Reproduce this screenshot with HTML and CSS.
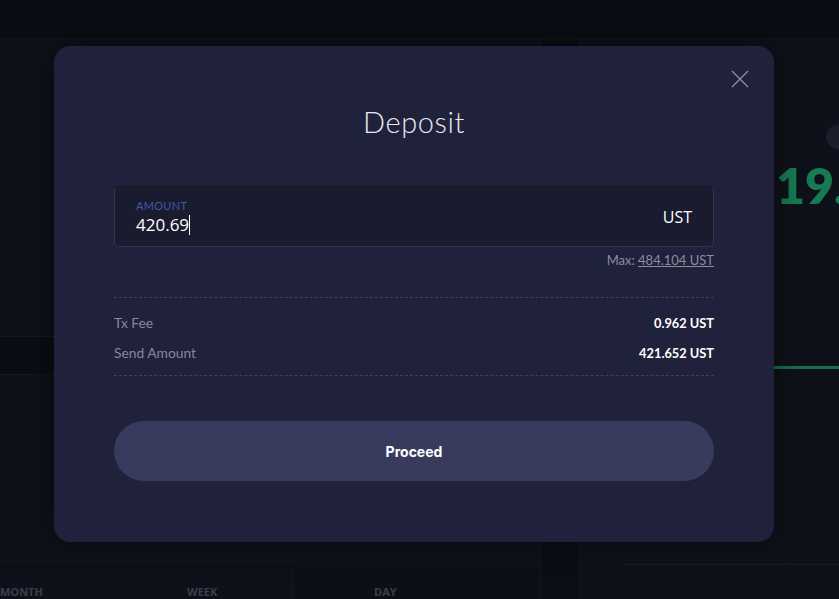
FILE: index.html
```html
<!DOCTYPE html>
<html lang="en">
<head>
    <meta charset="UTF-8">
    <meta name="viewport" content="width=device-width, initial-scale=1.0">
    <title>Deposit</title>
    <link rel="stylesheet" href="styles.css">
</head>
<body>
    <div class="app">
        <div class="topbar"></div>
        <div class="dashboard">
            <div class="left-col">
                <div class="panel panel-top"></div>
                <div class="band"></div>
                <div class="panel panel-mid"></div>
                <div class="panel panel-bottom">
                    <div class="tabs">
                        <span>MONTH</span>
                        <span>WEEK</span>
                        <span>DAY</span>
                    </div>
                </div>
            </div>
            <div class="gutter"></div>
            <div class="right-col">
                <div class="toggle"></div>
                <div class="big-number">19.</div>
                <div class="green-line"></div>
                <div class="right-bottom"></div>
            </div>
        </div>
    </div>

    <div class="modal">
        <button class="close" aria-label="Close">
            <svg width="18" height="18" viewBox="0 0 18 18">
                <path d="M1 1 L17 17 M17 1 L1 17" stroke="#8e90a3" stroke-width="1.3" fill="none"/>
            </svg>
        </button>
        <h1 class="title">Deposit</h1>

        <div class="amount-box">
            <div class="amount-left">
                <div class="amount-label">AMOUNT</div>
                <div class="amount-value">420.69<span class="caret"></span></div>
            </div>
            <div class="amount-unit">UST</div>
        </div>
        <div class="max">Max: <a href="#">484.104 UST</a></div>

        <div class="divider first"></div>
        <div class="row row-fee">
            <span class="row-label">Tx Fee</span>
            <span class="row-value">0.962 UST</span>
        </div>
        <div class="row row-send">
            <span class="row-label">Send Amount</span>
            <span class="row-value">421.652 UST</span>
        </div>
        <div class="divider second"></div>

        <button class="proceed">Proceed</button>
    </div>
</body>
</html>
```

FILE: styles.css
```css
body {
    margin: 0;
    width: 839px;
    height: 599px;
    overflow: hidden;
    background-color: #0d0f17;
    font-family: Lato, "Open Sans", Arial, sans-serif;
}

.app {
    display: flex;
    flex-direction: column;
    height: 100%;
}

.topbar {
    height: 40px;
    background-color: #0b0d14;
    border-bottom: 1px solid #131623;
}

.dashboard {
    flex: 1;
    display: flex;
}

.left-col {
    width: 540px;
    display: flex;
    flex-direction: column;
}

.panel-top {
    height: 297px;
    background-color: #0f111a;
}

.band {
    height: 37px;
    background-color: #0b0d15;
    border-top: 1px solid #141724;
    border-bottom: 1px solid #141724;
}

.panel-mid {
    height: 191px;
    background-color: #0f111a;
}

.panel-bottom {
    flex: 1;
    width: 292px;
    background-color: #0f111a;
    border-top: 1px solid #080a10;
    border-right: 1px solid #141724;
    border-top-right-radius: 6px;
}

.tabs {
    display: flex;
    padding-top: 17px;
    font-family: "Open Sans", Arial, sans-serif;
    font-weight: 700;
    font-size: 11px;
    color: #3b3e4c;
}

.tabs span {
    flex-shrink: 0;
    width: 187px;
}

.gutter {
    width: 38px;
    background-color: #0c0e15;
    border-left: 1px solid #151826;
    border-right: 1px solid #151826;
}

.right-col {
    flex: 1;
    position: relative;
    background-color: #0f111a;
}

.toggle {
    position: absolute;
    left: 246px;
    top: 86px;
    width: 30px;
    height: 24px;
    border-radius: 12px;
    background-color: #1c1e2b;
}

.big-number {
    position: absolute;
    left: 196px;
    top: 116px;
    font-family: Lato, Arial, sans-serif;
    font-weight: 800;
    font-size: 50px;
    color: #167a52;
}

.green-line {
    position: absolute;
    left: 0;
    right: 0;
    top: 327px;
    height: 3px;
    background-color: #15714b;
}

.right-bottom {
    position: absolute;
    left: 40px;
    right: 0;
    top: 525px;
    bottom: 0;
    border-top: 1px solid #161927;
}

.modal {
    position: absolute;
    left: 54px;
    top: 46px;
    width: 720px;
    height: 496px;
    box-sizing: border-box;
    padding: 59px 60px 0;
    background-color: #20213a;
    border-radius: 16px;
    box-shadow: 0 0 30px rgba(0, 0, 0, 0.5);
}

.close {
    position: absolute;
    top: 24px;
    right: 25px;
    padding: 0;
    border: none;
    background: none;
    cursor: pointer;
}

.close svg {
    display: block;
}

.title {
    margin: 0 0 47px;
    height: 34px;
    line-height: 34px;
    text-align: center;
    font-family: Lato, Arial, sans-serif;
    font-weight: 300;
    font-size: 29px;
    color: #e8e9f0;
    letter-spacing: 0.6px;
}

.amount-box {
    height: 61px;
    box-sizing: border-box;
    display: flex;
    align-items: center;
    justify-content: space-between;
    padding: 0 21px;
    background-color: #1a1b2f;
    border: 1px solid #34364d;
    border-top-color: #15161f;
    border-radius: 5px;
}

.amount-left {
    padding-top: 2px;
}

.amount-label {
    font-size: 11px;
    line-height: 14px;
    color: #3d5aa6;
    letter-spacing: 0.3px;
}

.amount-value {
    display: flex;
    align-items: center;
    font-family: "Open Sans", Arial, sans-serif;
    font-size: 17px;
    line-height: 24px;
    color: #ffffff;
}

.caret {
    display: inline-block;
    width: 1px;
    height: 20px;
    margin-left: 0;
    background-color: #ffffff;
}

.amount-unit {
    font-family: "Open Sans", Arial, sans-serif;
    font-size: 16px;
    color: #ffffff;
}

.max {
    margin-top: 6px;
    line-height: 14px;
    text-align: right;
    font-size: 13px;
    color: #8b8d9e;
}

.max a {
    color: #8b8d9e;
    text-decoration: underline;
}

.divider {
    border-top: 1px dashed #3f4157;
}

.divider.first {
    margin-top: 30px;
}

.divider.second {
    margin-top: 14px;
}

.row {
    display: flex;
    justify-content: space-between;
    line-height: 16px;
}

.row-fee {
    margin-top: 17px;
}

.row-send {
    margin-top: 14px;
}

.row-label {
    font-size: 13.8px;
    color: #878999;
}

.row-value {
    font-size: 12.8px;
    color: #ffffff;
    font-weight: 700;
}

.proceed {
    display: block;
    width: 100%;
    height: 60px;
    margin-top: 45px;
    border: none;
    border-radius: 30px;
    background-color: #383b5e;
    color: #ffffff;
    font-family: Inter, Arial, sans-serif;
    font-weight: 700;
    font-size: 14px;
    cursor: pointer;
}
```
